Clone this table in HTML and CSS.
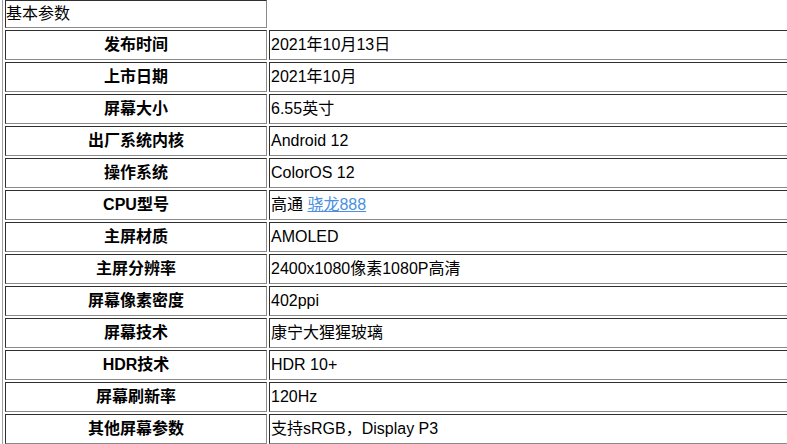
FILE: index.html
```html
<!DOCTYPE html>
<html>
<head>
<meta charset="utf-8">
<link rel="stylesheet" href="styles.css">
</head>
<body>
<table class="spec">
<tr><td class="head">基本参数</td></tr>
<tr><th>发布时间</th><td>2021年10月13日</td></tr>
<tr><th>上市日期</th><td>2021年10月</td></tr>
<tr><th>屏幕大小</th><td>6.55英寸</td></tr>
<tr><th>出厂系统内核</th><td>Android 12</td></tr>
<tr><th>操作系统</th><td>ColorOS 12</td></tr>
<tr><th>CPU型号</th><td>高通 <a class="link" href="#">骁龙888</a></td></tr>
<tr><th>主屏材质</th><td>AMOLED</td></tr>
<tr><th>主屏分辨率</th><td>2400x1080像素1080P高清</td></tr>
<tr><th>屏幕像素密度</th><td>402ppi</td></tr>
<tr><th>屏幕技术</th><td>康宁大猩猩玻璃</td></tr>
<tr><th>HDR技术</th><td>HDR 10+</td></tr>
<tr><th>屏幕刷新率</th><td>120Hz</td></tr>
<tr><th>其他屏幕参数</th><td>支持sRGB，Display P3</td></tr>
</table>
</body>
</html>
```
FILE: styles.css
```css
html {
  overflow: hidden;
  background: #fff;
}
body {
  margin: 0;
  font-family: "Liberation Sans", "Noto Sans CJK SC", sans-serif;
  font-size: 16px;
  color: #000;
}
.spec {
  margin: -3px 0 0 2px;
  width: 1000px;
  border-collapse: separate;
  border-spacing: 2px;
  border-style: solid;
  border-width: 1px;
  border-color: #a0a0a0 #606060 #606060 #a0a0a0;
}
.spec th,
.spec td {
  height: 26px;
  padding: 1px;
  border-style: solid;
  border-width: 1px;
  border-color: #303030 #8a8a8a #8a8a8a #303030;
  vertical-align: middle;
  line-height: 18px;
}
.spec th {
  width: 258px;
  font-weight: bold;
  text-align: center;
}
.spec td {
  text-align: left;
}
.spec td.head {
  padding: 0;
  width: 260px;
}
.link {
  color: #4a8fe0;
  text-decoration: underline;
}
```
